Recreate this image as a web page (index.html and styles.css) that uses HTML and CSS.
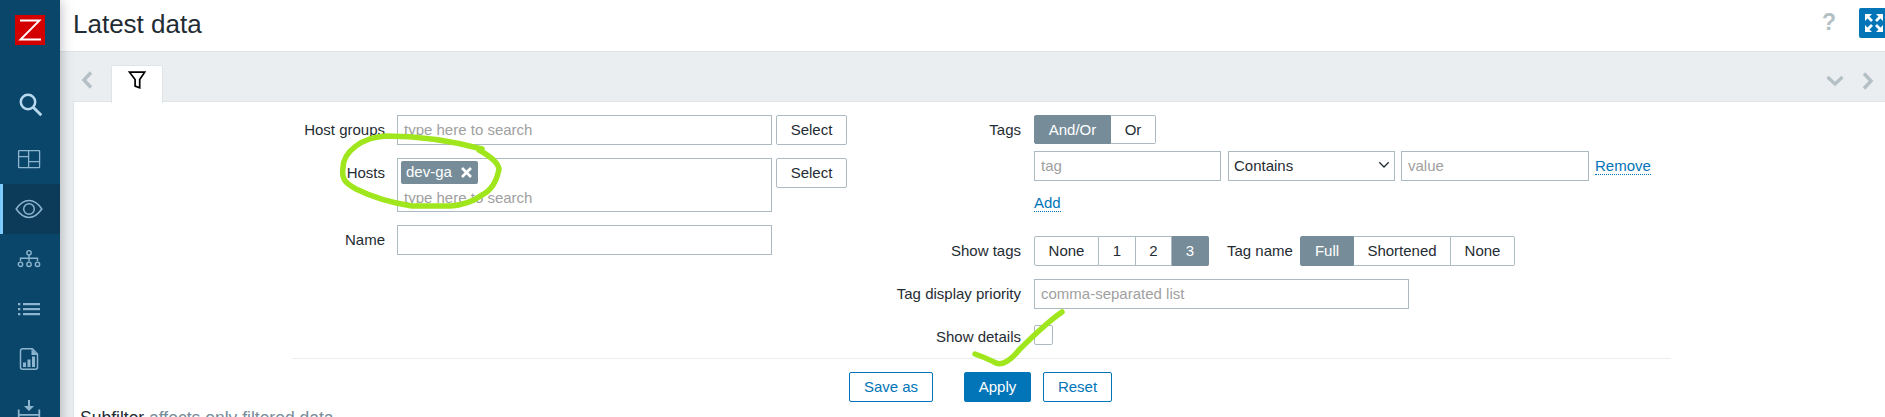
FILE: index.html
```html
<!DOCTYPE html>
<html lang="en">
<head>
<meta charset="utf-8">
<title>Latest data</title>
<link rel="stylesheet" href="styles.css">
</head>
<body>
<div class="app">
  <nav class="sidebar">
    <div class="logo"><svg width="30" height="30" viewBox="0 0 30 30"><path d="M5 5.500H24.500L5.500 24.500H26" fill="none" stroke="#fff" stroke-width="1.900"/></svg></div>
    <a class="nav-item search"><svg width="24" height="24" viewBox="0 0 24 24" fill="none" stroke="#b8d8ee"><circle cx="9" cy="9" r="7.200" stroke-width="2.500"/><path d="M14.200 14.200L22.300 22.300" stroke-width="2.900"/></svg></a>
    <a class="nav-item"><svg width="24" height="24" viewBox="0 0 24 24" fill="none" stroke="#8db5cf" stroke-width="1.300"><rect x="1.600" y="3.600" width="21" height="17" rx=".6"/><path d="M11.600 3.600v17M1.600 9.600h10M11.600 14.600h11"/></svg></a>
    <a class="nav-item active"><svg width="28" height="24" viewBox="0 0 28 24" fill="none" stroke="#8db5cf" stroke-width="1.500"><path d="M1.200 12Q7 3.600 14 3.600T26.800 12Q21 20.400 14 20.400T1.200 12Z"/><circle cx="14" cy="12" r="5.300"/></svg></a>
    <a class="nav-item"><svg width="24" height="24" viewBox="0 0 24 24" fill="none" stroke="#8db5cf" stroke-width="1.400"><circle cx="12" cy="5.800" r="2.200"/><circle cx="3.500" cy="17.300" r="2.200"/><circle cx="12" cy="17.300" r="2.200"/><circle cx="20.500" cy="17.300" r="2.200"/><path d="M12 8v6.500M3.500 14v-2.800h17v2.800"/></svg></a>
    <a class="nav-item"><svg width="24" height="24" viewBox="0 0 24 24" fill="#8db5cf"><path d="M1 6h2.300v2.300H1zM6 6h17v2.300H6zM1 11h2.300v2.300H1zM6 11h17v2.300H6zM1 16h2.300v2.300H1zM6 16h17v2.300H6z"/></svg></a>
    <a class="nav-item"><svg width="24" height="24" viewBox="0 0 24 24"><path d="M15.500 1.800H5.500a2 2 0 0 0-2 2v16.400a2 2 0 0 0 2 2h13a2 2 0 0 0 2-2V7z" fill="none" stroke="#8db5cf" stroke-width="1.500"/><path d="M14.500 2v6h6zM6 15.500h3V20H6zM10.500 12.500h3V20h-3zM15 9.500h3V20h-3z" fill="#8db5cf"/></svg></a>
    <a class="nav-item"><svg width="24" height="24" viewBox="0 0 24 24"><path d="M1.700 12.500v8.500h20.600v-8.500M2 17.800h20" fill="none" stroke="#8db5cf" stroke-width="1.800"/><path d="M11 3h2v6h4l-5 5-5-5h4z" fill="#8db5cf"/></svg></a>
  </nav>
  <main class="page">
    <header class="header">
      <h1>Latest data</h1>
      <div class="header-tools"><span class="help">?</span><button class="kiosk"><svg width="20" height="20" viewBox="0 0 20 20" fill="#fff" stroke="#fff" stroke-width="2.800"><path d="M3 3l5 5M17 3l-5 5M3 17l5-5M17 17l-5-5"/><path d="M1 1h7L1 8zM19 1h-7l7 7zM1 19h7l-7-7zM19 19h-7l7-7z" stroke="none"/></svg></button></div>
    </header>
    <div class="tabs">
      <svg class="prev" width="12" height="18" viewBox="0 0 12 18"><path d="M10 1.500L3 9l7 7.500"/></svg>
      <div class="tab"><svg width="20" height="20" viewBox="0 0 20 20"><path d="M2.500 2.200h15.200l-5 7.400v8.200l-4.600-1.700V9.600z"/></svg></div>
      <div class="tab-tools">
        <svg width="18" height="12" viewBox="0 0 18 12"><path d="M1.500 2L9 9l7.500-7"/></svg>
        <svg width="12" height="18" viewBox="0 0 12 18"><path d="M2 1.500L9 9l-7 7.500"/></svg>
      </div>
    </div>
    <section class="panel">
      <div class="filter">
        <div class="column left">
          <div class="row"><label>Host groups</label><input class="wide" placeholder="type here to search"><button class="select-btn">Select</button></div>
          <div class="row"><label>Hosts</label><div class="multi wide"><span class="chip">dev-ga<svg width="11" height="11" viewBox="0 0 11 11"><path d="M1 1l9 9M10 1l-9 9" stroke="#fff" stroke-width="2.600"/></svg></span><span class="hint">type here to search</span></div><button class="select-btn">Select</button></div>
          <div class="row"><label>Name</label><input class="wide"></div>
        </div>
        <div class="column right">
          <div class="row tags-row"><label>Tags</label>
            <div class="tags">
              <div class="segments short"><span class="on w77">And/Or</span><span class="w45">Or</span></div>
              <div class="tag-line"><input class="tag-key" placeholder="tag"><div class="dropdown">Contains<svg width="12" height="8" viewBox="0 0 12 8"><path d="M1.300 1.300L6 6l4.700-4.700" fill="none" stroke="#1f2c33" stroke-width="1.300"/></svg></div><input class="tag-value" placeholder="value"><a class="link">Remove</a></div>
              <a class="link add">Add</a>
            </div>
          </div>
          <div class="row"><label>Show tags</label>
            <div class="segments"><span class="w65">None</span><span class="w37">1</span><span class="w36">2</span><span class="on w37">3</span></div>
            <span class="tag-name">Tag name</span>
            <div class="segments"><span class="on w54">Full</span><span class="w97">Shortened</span><span class="w64">None</span></div>
          </div>
          <div class="row"><label>Tag display priority</label><input class="wide" placeholder="comma-separated list"></div>
          <div class="row"><label>Show details</label><span class="checkbox"></span></div>
        </div>
      </div>
      <div class="actions"><button class="save">Save as</button><button class="apply">Apply</button><button class="reset">Reset</button></div>
      <h4 class="subfilter">Subfilter <span>affects only filtered data</span></h4>
    </section>
  </main>
</div>
<svg class="marks" width="1885" height="417" viewBox="0 0 1885 417">
  <path d="M482 149C452 141 420 136 386 136C362 137 343 152 343 168C341 180 347 184 356 189C374 198 393 203 412 206H450C464 205 474 201 482 195C492 190 497 180 499 169C498 162 488 155 479 150"/>
  <path d="M975 354C984 357 990 360 996 363C1002 366 1011 360 1019 350C1034 335 1049 321 1062 312"/>
</svg>
</body>
</html>
```
FILE: styles.css
```css
* { box-sizing: border-box; }
body { margin: 0; width: 1885px; height: 417px; overflow: hidden; background: #ebeef0; color: #1f2c33; font: 15px/18px "Liberation Sans", Arial, sans-serif; }
svg { display: block; flex: none; }
.app { display: flex; height: 417px; overflow: hidden; }
.sidebar { position: relative; z-index: 1; flex: none; width: 60px; height: 430px; background: #0a466a; box-shadow: 0 0 12px rgba(31, 44, 51, .35); }
.logo { width: 30px; height: 30px; margin: 15px 0 35px 15px; background: #d40000; }
.nav-item { display: flex; align-items: center; justify-content: center; height: 50px; padding-right: 2px; }
.nav-item.search { height: 54px; padding: 0 0 4px 1px; }
.nav-item.active { background: #0b3b59; border-left: 3px solid #7fcbff; padding-right: 5px; }
.page { flex: 1; min-width: 0; }
.header { display: flex; justify-content: space-between; height: 52px; padding: 9px 0 0 12px; background: #fff; border-bottom: 1px solid #dfe4e7; }
h1 { margin: 0 0 0 1px; font-size: 26px; line-height: 30px; font-weight: 400; }
.header-tools { display: flex; margin: -1px -4px 0 0; }
.help { width: 37px; margin-top: 1px; color: #b4c0c6; font-size: 23px; line-height: 27px; font-weight: 700; }
.kiosk { display: flex; align-items: center; justify-content: center; width: 30px; height: 30px; padding: 0; border: 0; border-radius: 2px; background: #0275b8; }
.tabs { display: flex; height: 49px; padding: 13px 11px 0 21px; }
.tabs > svg, .tab-tools svg { fill: none; stroke: #b4c0c6; stroke-width: 3.400; }
.tabs .prev { margin-top: 6px; }
.tab { position: relative; z-index: 1; width: 52px; height: 38px; margin-left: 18px; padding: 4px 0 0 15px; background: #fff; border: 1px solid #dfe4e7; border-bottom: 0; border-radius: 2px 2px 0 0; }
.tab svg { fill: none; stroke: #000; stroke-width: 1.700; }
.tab-tools { display: flex; align-items: center; gap: 18px; height: 32px; margin-left: auto; }
.panel { height: 330px; margin-left: 13px; background: #fff; border: 1px solid #dfe4e7; border-right: 0; }
.filter { display: flex; height: 257px; margin: 0 214px 0 218px; padding-top: 13px; border-bottom: 1px solid #ebeef0; }
.column { display: flex; flex-direction: column; gap: 13px; }
.left { flex: none; width: 589px; }
.row { display: flex; align-items: flex-start; }
label { flex: none; width: 93px; line-height: 30px; text-align: right; margin-right: 12px; }
.right label { width: 140px; margin-right: 13px; }
input, .multi, .dropdown { height: 30px; border: 1px solid #acbbc2; border-radius: 0; background: #fff; padding: 0 6px 1px; font: inherit; outline: 0; }
input::placeholder, .hint { color: #a0a0a0; opacity: 1; }
.wide { width: 375px; }
.multi { display: flex; flex-direction: column; align-items: flex-start; height: 54px; padding: 2px 3px; }
.chip { display: flex; align-items: center; gap: 9px; height: 23px; width: 77px; padding: 0 0 1px 5px; background: #768d99; color: #fff; border-radius: 2px; }
.chip svg { margin-top: 1px; }
.hint { margin: 5px 0 0 3px; }
button { font: inherit; color: #1f2c33; background: #fff; border: 1px solid #acbbc2; border-radius: 2px; height: 30px; padding: 0 0 1px; }
.select-btn { width: 71px; margin-left: 4px; }
.tags { width: 630px; height: 108px; }
.segments { display: flex; height: 30px; }
.segments.short { height: 29px; }
.segments span { border: 1px solid #acbbc2; border-left-width: 0; line-height: 27px; text-align: center; }
.segments span:first-child { border-left-width: 1px; border-radius: 2px 0 0 2px; }
.segments span:last-child { border-radius: 0 2px 2px 0; }
.segments .on { background: #768d99; border-color: #768d99; color: #fff; }
.w77 { width: 77px; } .w45 { width: 45px; } .w65 { width: 65px; } .w37 { width: 37px; } .w36 { width: 36px; } .w54 { width: 54px; } .w97 { width: 97px; } .w64 { width: 64px; }
.tag-line { display: flex; align-items: flex-start; margin-top: 7px; }
.tag-key { width: 187px; margin-right: 7px; }
.dropdown { display: flex; align-items: center; justify-content: space-between; width: 167px; padding: 0 4px 1px 5px; margin-right: 6px; }
.dropdown svg { margin-top: -2px; }
.tag-value { width: 188px; margin-right: 6px; }
.link { color: #0275b8; line-height: 17px; border-bottom: 1px dotted #0275b8; margin-top: 6px; }
.add { display: inline-block; margin-top: 13px; }
.tag-name { width: 73px; margin-left: 18px; line-height: 30px; }
.checkbox { width: 19px; height: 20px; margin-top: 3px; border: 1px solid #acbbc2; border-radius: 2px; }
.actions { display: flex; margin: 13px 0 0 775px; }
.actions button { color: #0275b8; border-color: #0275b8; }
.actions .save { width: 84px; margin-right: 31px; }
.actions .apply { width: 67px; margin-right: 12px; background: #0275b8; color: #fff; }
.actions .reset { width: 69px; }
.subfilter { margin: 6px 0 0 6px; font-size: 17.500px; line-height: 20px; font-weight: 400; }
.subfilter span { color: #768d99; }
.marks { position: absolute; left: 0; top: 0; z-index: 3; pointer-events: none; fill: none; stroke: #a0e61c; stroke-width: 5.500; stroke-linecap: round; stroke-linejoin: round; }
```
